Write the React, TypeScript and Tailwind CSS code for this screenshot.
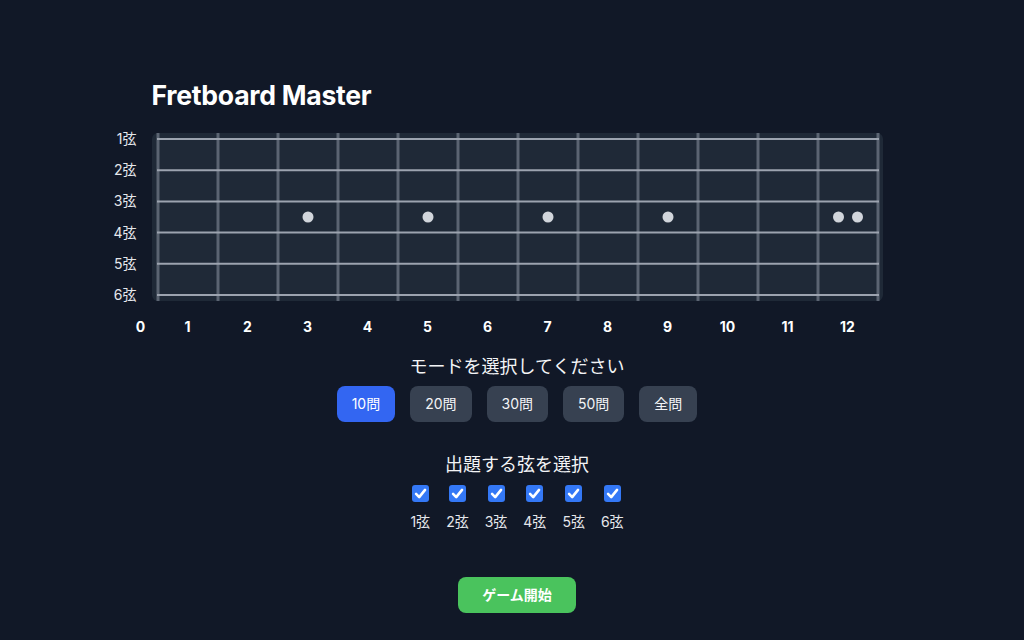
import React from 'react';

const font = { fontFamily: 'Inter, "Noto Sans CJK JP", sans-serif' };

const strings = ['1弦', '2弦', '3弦', '4弦', '5弦', '6弦'];
const modes = ['10問', '20問', '30問', '50問', '全問'];

function Fretboard() {
  const fretXs = Array.from({ length: 13 }, (_, i) => 6 + i * 60);
  const stringYs = Array.from({ length: 6 }, (_, i) => 6 + i * 31.2);
  const dotY = (stringYs[2] + stringYs[3]) / 2;
  const dots = [3, 5, 7, 9].map((f) => 6 + 60 * (f - 0.5));

  return (
    <svg width="731" height="168" className="block">
      <rect x="0" y="0" width="731" height="168" rx="6" fill="#1f2937" />
      {fretXs.map((x) => (
        <line key={x} x1={x} y1={0} x2={x} y2={168} stroke="#5b6472" strokeWidth={3} />
      ))}
      {stringYs.map((y) => (
        <line key={y} x1={5} y1={y} x2={727} y2={y} stroke="#9ca3af" strokeWidth={2} />
      ))}
      {dots.map((x) => (
        <circle key={x} cx={x} cy={dotY} r={5.5} fill="#d1d5db" />
      ))}
      <circle cx={686.5} cy={dotY} r={5.5} fill="#d1d5db" />
      <circle cx={705.5} cy={dotY} r={5.5} fill="#d1d5db" />
    </svg>
  );
}

function Check() {
  return (
    <div className="w-[17px] h-[17px] rounded-[3px] bg-[#3478f6] flex items-center justify-center">
      <svg width="13" height="13" viewBox="0 0 12 12" fill="none">
        <path d="M1.9 6.4 L4.8 9.3 L10.2 2.7" stroke="white" strokeWidth="2.4" strokeLinecap="round" strokeLinejoin="round" />
      </svg>
    </div>
  );
}

export default function App() {
  return (
    <div className="min-h-screen bg-[#111827] text-white flex justify-center pl-[10px] pt-[79px]" style={font}>
      <div className="w-[731px] flex flex-col">
        <h1 className="text-[26.6px] leading-[32px] font-bold tracking-[-0.01em]">Fretboard Master</h1>

        {/* fretboard with string labels */}
        <div className="flex -ml-[55px] mt-[22px]">
          <div className="w-[40px] mr-[15px] h-[176px] -mt-[4px] flex flex-col justify-between text-right">
            {strings.map((s) => (
              <div key={s} className="h-[20px] leading-[20px] text-sm text-[#e5e7eb]">{s}</div>
            ))}
          </div>
          <div className="shrink-0">
            <Fretboard />
          </div>
        </div>

        {/* fret numbers */}
        <div className="flex -ml-[28px] mt-[12px] text-sm font-bold leading-[20px]">
          <div className="w-[34px] text-center">0</div>
          {Array.from({ length: 12 }, (_, i) => (
            <div key={i} className="w-[60px] text-center">{i + 1}</div>
          ))}
        </div>

        {/* mode select */}
        <div className="mt-[16px] text-lg leading-[28px] text-center text-[#f3f4f6]">モードを選択してください</div>
        <div className="mt-[5px] flex justify-center gap-[15px]">
          {modes.map((m, i) => (
            <button
              key={m}
              className={`px-[15px] h-[36px] rounded-lg text-sm ${i === 0 ? 'bg-[#3366f2] text-white' : 'bg-[#374151] text-[#f3f4f6]'}`}
            >
              {m}
            </button>
          ))}
        </div>

        {/* string select */}
        <div className="mt-[29px] text-lg leading-[28px] text-center text-[#f3f4f6]">出題する弦を選択</div>
        <div className="mt-[6px] flex justify-center gap-[16px]">
          {strings.map((s) => (
            <div key={s} className="flex flex-col items-center gap-[10px]">
              <Check />
              <span className="text-sm leading-[20px] text-[#e5e7eb]">{s}</span>
            </div>
          ))}
        </div>

        <div className="mt-[45px] flex justify-center">
          <button className="h-[36px] px-6 rounded-lg bg-[#4ac35d] text-white text-sm font-bold">ゲーム開始</button>
        </div>
      </div>
    </div>
  );
}
